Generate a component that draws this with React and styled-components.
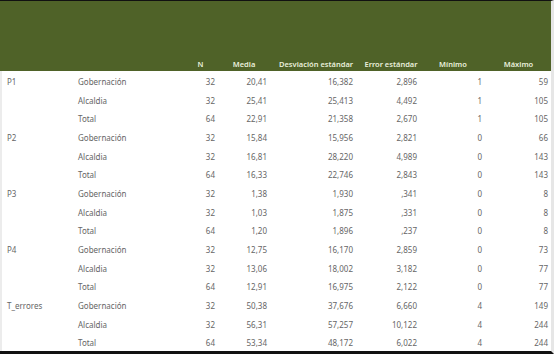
import React from 'react';
import styled, { createGlobalStyle } from 'styled-components';

const GlobalStyle = createGlobalStyle`
  html, body {
    margin: 0;
    padding: 0;
    background: #ffffff;
    overflow: hidden;
  }
  body {
    font-family: "Noto Sans", "Open Sans", sans-serif;
  }
`

const COLS = '70px 113px 35px 52px 92px 58px 66px 65px';

const Frame = styled.div`
  width: 551px;
  height: 350px;
  border-top: 1px solid #111;
  border-right: 3px solid #e6e6e6;
  border-bottom: 3px solid #111;
  display: flex;
  flex-direction: column;
`

const HeaderRow = styled.div`
  display: grid;
  grid-template-columns: ${COLS};
  height: 70px;
  align-items: end;
  background-color: #4f6228;
  color: #e9efdc;
  font-size: 7.5px;
  font-weight: 600;
`

const HeadCell = styled.div`
  text-align: center;
  line-height: 12px;
  padding-bottom: 1px;
  white-space: nowrap;
`

const Body = styled.div`
  flex: 1;
  box-shadow: inset 2px 0 0 #ececec;
`

const Group = styled.div`
  display: grid;
  grid-template-columns: ${COLS};
  grid-template-rows: repeat(3, calc(56px / 3));
`

const Cell = styled.div`
  font-size: 8px;
  color: #666666;
  line-height: 12px;
  padding-top: 5px;
  white-space: nowrap;
`

const LabelCell = styled(Cell)`
  padding-left: ${p => p.$indent}px;
`

const NumCell = styled(Cell)`
  text-align: right;
  padding-right: ${p => p.$pad}px;
`

const heads = ['', '', 'N', 'Media', 'Desviación estándar', 'Error estándar', 'Mínimo', 'Máximo'];
const pads = [3, 3, 9, 3, 4, 3];

const groups = [
  { name: 'P1', rows: [
    ['Gobernación', '32', '20,41', '16,382', '2,896', '1', '59'],
    ['Alcaldia', '32', '25,41', '25,413', '4,492', '1', '105'],
    ['Total', '64', '22,91', '21,358', '2,670', '1', '105'],
  ]},
  { name: 'P2', rows: [
    ['Gobernación', '32', '15,84', '15,956', '2,821', '0', '66'],
    ['Alcaldia', '32', '16,81', '28,220', '4,989', '0', '143'],
    ['Total', '64', '16,33', '22,746', '2,843', '0', '143'],
  ]},
  { name: 'P3', rows: [
    ['Gobernación', '32', '1,38', '1,930', ',341', '0', '8'],
    ['Alcaldia', '32', '1,03', '1,875', ',331', '0', '8'],
    ['Total', '64', '1,20', '1,896', ',237', '0', '8'],
  ]},
  { name: 'P4', rows: [
    ['Gobernación', '32', '12,75', '16,170', '2,859', '0', '73'],
    ['Alcaldia', '32', '13,06', '18,002', '3,182', '0', '77'],
    ['Total', '64', '12,91', '16,975', '2,122', '0', '77'],
  ]},
  { name: 'T_errores', rows: [
    ['Gobernación', '32', '50,38', '37,676', '6,660', '4', '149'],
    ['Alcaldia', '32', '56,31', '57,257', '10,122', '4', '244'],
    ['Total', '64', '53,34', '48,172', '6,022', '4', '244'],
  ]},
];

const App = () => {
  return (
    <>
      <GlobalStyle />
      <Frame>
        <HeaderRow>
          {heads.map((h, i) => <HeadCell key={i}>{h}</HeadCell>)}
        </HeaderRow>
        <Body>
          {groups.map((g) => (
            <Group key={g.name}>
              {g.rows.map((row, r) => (
                <React.Fragment key={r}>
                  <LabelCell $indent={7}>{r === 0 ? g.name : ''}</LabelCell>
                  <LabelCell $indent={8}>{row[0]}</LabelCell>
                  {row.slice(1).map((v, c) => (
                    <NumCell key={c} $pad={pads[c]}>{v}</NumCell>
                  ))}
                </React.Fragment>
              ))}
            </Group>
          ))}
        </Body>
      </Frame>
    </>
  );
}

export default App
